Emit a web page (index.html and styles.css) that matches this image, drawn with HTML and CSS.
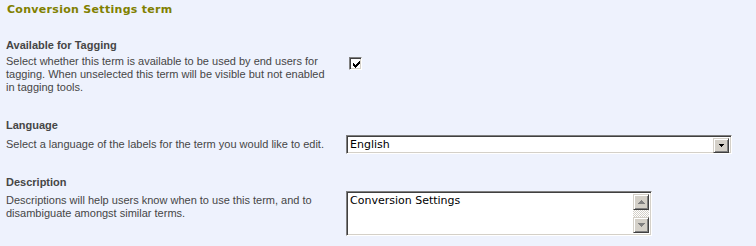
FILE: index.html
```html
<!DOCTYPE html>
<html>
    <head>
        <meta charset="UTF-8">
        <title>Term Properties</title>
        <link rel="stylesheet" href="styles.css">
    </head>
    <body>
        <div id="page">
            <h3 class="section_title">Conversion Settings term</h3>

            <div class="field first">
                <div class="field_info">
                    <div class="field_label">Available for Tagging</div>
                    <div class="field_desc">Select whether this term is available to be used by end users for tagging. When unselected this term will be visible but not enabled in tagging tools.</div>
                </div>
                <div class="field_control">
                    <label class="check">
                        <input type="checkbox" checked/>
                        <svg width="7" height="7" viewBox="0 0 7 7" shape-rendering="crispEdges">
                            <path d="M6 0h1v1h-1z M5 1h2v1h-2z M0 2h1v1h-1z M4 2h3v1h-3z M0 3h2v1h-2z M3 3h3v1h-3z M0 4h5v1h-5z M1 5h3v1h-3z M2 6h1v1h-1z" fill="#000"/>
                        </svg>
                    </label>
                </div>
            </div>

            <div class="field second">
                <div class="field_info">
                    <div class="field_label">Language</div>
                    <div class="field_desc">Select a language of the labels for the term you would like to edit.</div>
                </div>
                <div class="field_control">
                    <div class="dropdown">
                        <select>
                            <option>English</option>
                        </select>
                        <span class="btn3d drop_btn">
                            <svg width="5" height="3" viewBox="0 0 5 3" shape-rendering="crispEdges"><path d="M0 0h5v1h-5z M1 1h3v1h-3z M2 2h1v1h-1z" fill="#000"/></svg>
                        </span>
                    </div>
                </div>
            </div>

            <div class="field third">
                <div class="field_info">
                    <div class="field_label">Description</div>
                    <div class="field_desc">Descriptions will help users know when to use this term, and to disambiguate amongst similar terms.</div>
                </div>
                <div class="field_control">
                    <div class="textbox">
                        <textarea>Conversion Settings</textarea>
                        <div class="scrollbar">
                            <span class="btn3d scroll_btn">
                                <svg width="7" height="4" viewBox="0 0 7 4" shape-rendering="crispEdges"><path d="M3 0h1v1h-1z M2 1h3v1h-3z M1 2h5v1h-5z M0 3h7v1h-7z" fill="#808080"/></svg>
                            </span>
                            <span class="track"></span>
                            <span class="btn3d scroll_btn">
                                <svg width="7" height="4" viewBox="0 0 7 4" shape-rendering="crispEdges"><path d="M0 0h7v1h-7z M1 1h5v1h-5z M2 2h3v1h-3z M3 3h1v1h-1z" fill="#808080"/></svg>
                            </span>
                        </div>
                    </div>
                </div>
            </div>
        </div>
    </body>
</html>
```

FILE: styles.css
```css
body{
    margin: 0;
    background-color: #eef2fd;
    font-family: 'Liberation Sans', Arial, sans-serif;
    font-size: 11px;
    color: #464646;
}
#page{
    padding: 3px 0 0 6px;
}
.section_title{
    margin: 0 0 0 1px;
    font-family: 'DejaVu Sans', Verdana, sans-serif;
    font-size: 11px;
    line-height: 14px;
    font-weight: bold;
    letter-spacing: 0.3px;
    color: #808000;
}
.field{
    display: flex;
}
.field_info{
    width: 340px;
}
.field_label{
    font-weight: bold;
    font-size: 11px;
    line-height: 14px;
}
.field_desc{
    width: 325px;
    line-height: 13px;
}
.first{
    margin-top: 21px;
}
.first .field_desc{
    margin-top: 3px;
}
.first .field_control{
    padding: 19px 0 0 3px;
}
.second{
    margin-top: 24px;
}
.second .field_desc{
    margin-top: 6px;
}
.second .field_control{
    padding-top: 17px;
}
.third{
    margin-top: 21px;
}
.third .field_desc{
    margin-top: 5px;
}
.third .field_control{
    padding-top: 16px;
}

/* classic sunken controls */
.check, .dropdown, .textbox{
    box-sizing: border-box;
    border: 1px solid;
    border-color: #808080 #fff #fff #808080;
    box-shadow: inset 1px 1px #404040, inset -1px -1px #d4d0c8;
    background: #fff;
}
.check{
    display: flex;
    align-items: center;
    justify-content: center;
    width: 13px;
    height: 13px;
}
.check input{
    display: none;
}
.check svg{
    margin: 1px 0 0 1px;
}
.dropdown{
    display: flex;
    width: 386px;
    height: 19px;
    padding: 2px;
}
.dropdown select{
    flex: 1;
    appearance: none;
    border: none;
    background: none;
    padding: 0 0 0 1px;
    margin: 0;
    font-family: 'DejaVu Sans', Verdana, sans-serif;
    font-size: 11px;
    color: #000;
    outline: none;
}
.btn3d{
    display: flex;
    align-items: center;
    justify-content: center;
    box-sizing: border-box;
    background: #d4d0c8;
    border: 1px solid;
    border-color: #d4d0c8 #404040 #404040 #d4d0c8;
    box-shadow: inset 1px 1px #fff, inset -1px -1px #808080;
}
.drop_btn{
    width: 16px;
    height: 15px;
}
.textbox{
    display: flex;
    width: 306px;
    height: 45px;
    padding: 2px;
}
.textbox textarea{
    flex: 1;
    resize: none;
    border: none;
    outline: none;
    overflow: hidden;
    margin: 0;
    padding: 0 0 0 1px;
    font-family: 'DejaVu Sans', Verdana, sans-serif;
    font-size: 11px;
    line-height: 14px;
    color: #000;
}
.scrollbar{
    display: flex;
    flex-direction: column;
    width: 16px;
}
.scroll_btn{
    height: 16px;
}
.track{
    flex: 1;
    background-color: #fff;
    background-image: repeating-conic-gradient(#d4d0c8 0 25%, #fff 0 50%);
    background-size: 2px 2px;
}
```
